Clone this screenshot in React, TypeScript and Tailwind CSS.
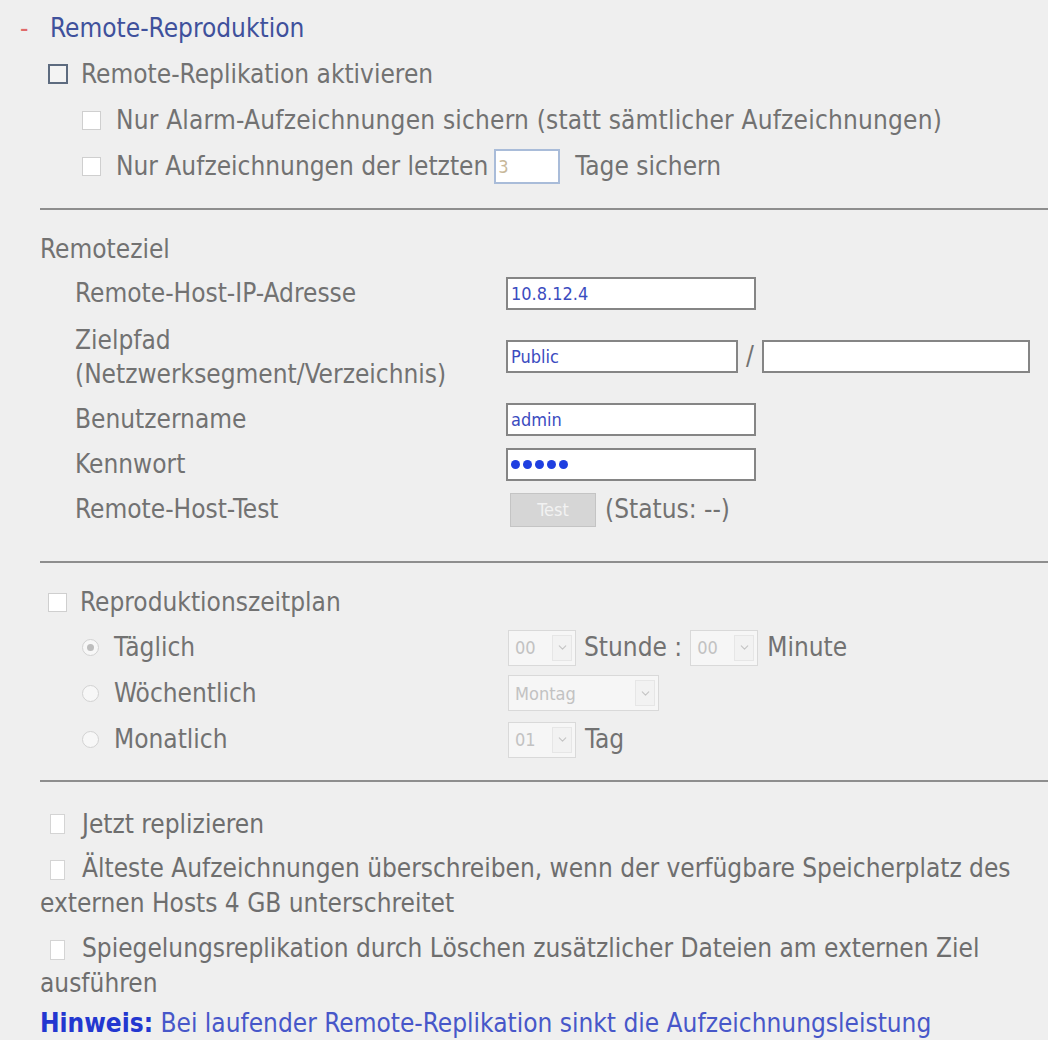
import { ChevronDown } from 'lucide-react'
import type { ReactNode } from 'react'

const font = "font-['DejaVu_Sans_Condensed','DejaVu_Sans',sans-serif] [font-stretch:semi-condensed]"

function Box({ strong = false, className = '' }: { strong?: boolean; className?: string }) {
  return strong ? (
    <span className={`inline-block size-[20px] shrink-0 border-2 border-[#5d6b7f] bg-[#f3f3f3] ${className}`} />
  ) : (
    <span className={`inline-block size-[19px] shrink-0 border border-[#cfcfcf] bg-white ${className}`} />
  )
}

function Radio({ on = false }: { on?: boolean }) {
  return (
    <span className="inline-flex size-[17px] shrink-0 items-center justify-center rounded-full border border-[#d2d2d2] bg-[#f7f7f7]">
      {on && <span className="size-[7px] rounded-full bg-[#bdbdbd]" />}
    </span>
  )
}

function Field({ value, w = 'w-[250px]', dots = false }: { value?: string; w?: string; dots?: boolean }) {
  return (
    <div className={`flex h-[33px] ${w} items-center border-2 border-[#858585] bg-white px-[3px]`}>
      {dots ? (
        <span className="flex gap-[3px]">
          {[0, 1, 2, 3, 4].map((i) => (
            <span key={i} className="size-[9px] rounded-full bg-[#1f3fe0]" />
          ))}
        </span>
      ) : (
        <span className="text-[18px] text-[#3b4cbf]">{value}</span>
      )}
    </div>
  )
}

function Select({ value, w }: { value: string; w: string }) {
  return (
    <div className={`flex h-[36px] ${w} shrink-0 items-center justify-between border border-[#d9d9d9] bg-[#f6f6f6] pl-[6px] pr-[3px]`}>
      <span className="text-[18px] text-[#c2c2c2]">{value}</span>
      <span className="flex h-[26px] w-[20px] items-center justify-center border border-[#e6e6e6] bg-[#f2f2f2]">
        <ChevronDown className="size-[13px] text-[#c4c4c4]" strokeWidth={2} />
      </span>
    </div>
  )
}

function Row({ children, className = '' }: { children: ReactNode; className?: string }) {
  return <div className={`flex items-center ${className.includes('h-[') ? '' : 'h-[46px]'} ${className}`}>{children}</div>
}

function Rule() {
  return <div className="ml-[40px] h-[2px] bg-[#8e8e8e]" />
}

// the lower block is drawn narrower in the original
function SlimBox({ className = '' }: { className?: string }) {
  return <span className={`inline-block h-[20px] w-[15px] shrink-0 border border-[#d4d4d4] bg-white ${className}`} />
}

export default function App() {
  return (
    <div className={`h-[1040px] w-[1048px] overflow-hidden bg-[#efefef] text-[26px] text-[#727272] ${font}`}>
      <Row className="mt-[5px]">
        <span className="w-[50px] pl-[20px] text-[#e06a6a]">-</span>
        <span className="text-[#3f519c]">Remote-Reproduktion</span>
      </Row>

      <Row className="gap-[13px] pl-[48px]">
        <Box strong />
        <span>Remote-Replikation aktivieren</span>
      </Row>
      <Row className="gap-[15px] pl-[82px]">
        <Box />
        <span className="tracking-[0.2px]">Nur Alarm-Aufzeichnungen sichern (statt sämtlicher Aufzeichnungen)</span>
      </Row>
      <Row className="h-[47px] gap-[15px] pl-[82px]">
        <Box />
        <span>Nur Aufzeichnungen der letzten</span>
        <span className="-ml-[9px] flex h-[35px] w-[66px] items-center border-2 border-[#a9bcd9] bg-white px-[2px] text-[18px] text-[#c8b89a]">
          3
        </span>
        <span>Tage sichern</span>
      </Row>

      <div className="mt-[18px]">
        <Rule />
      </div>

      <Row className="mt-[18px] h-[42px] pl-[40px]">Remoteziel</Row>

      <div className="pl-[75px]">
        <Row>
          <span className="w-[431px]">Remote-Host-IP-Adresse</span>
          <Field value="10.8.12.4" />
        </Row>
        <div className="flex h-[81px] items-center">
          <span className="w-[431px] leading-[34px]">
            Zielpfad
            <br />
            (Netzwerksegment/Verzeichnis)
          </span>
          <Field value="Public" w="w-[232px]" />
          <span className="mx-[8px]">/</span>
          <Field w="w-[268px]" />
        </div>
        <Row className="h-[45px]">
          <span className="w-[431px]">Benutzername</span>
          <Field value="admin" />
        </Row>
        <Row className="h-[45px]">
          <span className="w-[431px]">Kennwort</span>
          <Field dots />
        </Row>
        <Row className="h-[45px]">
          <span className="w-[435px]">Remote-Host-Test</span>
          <span className="flex h-[34px] w-[86px] items-center justify-center border border-[#c4c4c4] bg-[#d6d6d6] text-[18px] text-[#f2f2f2]">
            Test
          </span>
          <span className="ml-[9px]">(Status: --)</span>
        </Row>
      </div>

      <div className="mt-[29px]">
        <Rule />
      </div>

      <Row className="mt-[16px] gap-[13px] pl-[48px]">
        <Box />
        <span>Reproduktionszeitplan</span>
      </Row>
      <div className="pl-[82px]">
        <Row className="h-[45px]">
          <span className="flex w-[426px] items-center gap-[15px]">
            <Radio on />
            Täglich
          </span>
          <Select value="00" w="w-[68px]" />
          <span className="mx-[8px]">Stunde :</span>
          <Select value="00" w="w-[68px]" />
          <span className="ml-[9px]">Minute</span>
        </Row>
        <Row className="h-[46px]">
          <span className="flex w-[426px] items-center gap-[15px]">
            <Radio />
            Wöchentlich
          </span>
          <Select value="Montag" w="w-[151px]" />
        </Row>
        <Row className="h-[47px]">
          <span className="flex w-[426px] items-center gap-[15px]">
            <Radio />
            Monatlich
          </span>
          <Select value="01" w="w-[68px]" />
          <span className="ml-[9px]">Tag</span>
        </Row>
      </div>

      <div className="mt-[17px]">
        <Rule />
      </div>

      <div className="mt-[19px] pl-[40px] pr-[14px] text-[26px] leading-[35px] text-[#6e6e6e]">
        <div className="flex h-[46px] items-center gap-[17px] pl-[10px]">
          <SlimBox />
          <span>Jetzt replizieren</span>
        </div>
        <p className="mt-[4px]">
          <SlimBox className="ml-[10px] mr-[17px] align-middle" />
          Älteste Aufzeichnungen überschreiben, wenn der verfügbare Speicherplatz des externen Hosts 4 GB unterschreitet
        </p>
        <p className="mt-[10px]">
          <SlimBox className="ml-[10px] mr-[17px] align-middle" />
          Spiegelungsreplikation durch Löschen zusätzlicher Dateien am externen Ziel ausführen
        </p>
        <p className="mt-[5px] text-[#4757c9]">
          <b className="text-[#2337d0]">Hinweis:</b> Bei laufender Remote-Replikation sinkt die Aufzeichnungsleistung
        </p>
      </div>
    </div>
  )
}
